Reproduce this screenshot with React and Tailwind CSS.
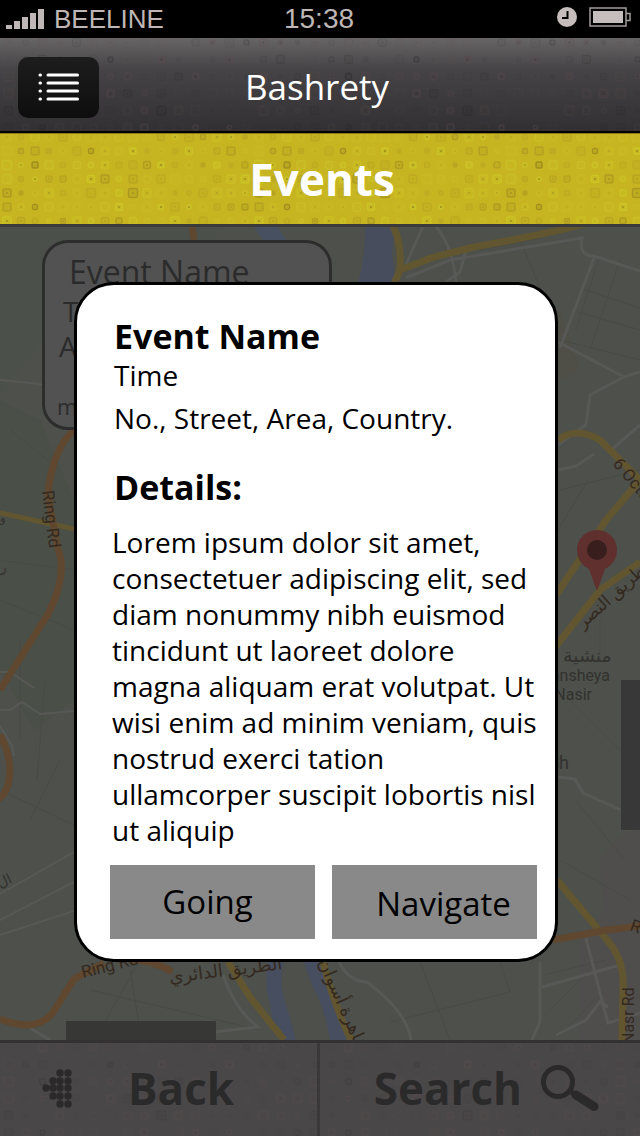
import React from "react";

function hash(n) {
  const v = Math.sin(n * 127.1 + 311.7) * 43758.5453;
  return v - Math.floor(v);
}

const MOSAIC_CELLS = Array.from({ length: 126 }, (_, i) => ({
  col: i % 18,
  row: Math.floor(i / 18),
  size: 4 + Math.round(hash(i) * 5),
  dark: hash(i + 500) > 0.55,
  tone: hash(i + 900) ** 2,
  dot: hash(i + 1300) > 0.4,
}));

function Mosaic({ id, cell, light, dark, strength }) {
  return (
    <svg className="absolute inset-0 h-full w-full" aria-hidden="true">
      <defs>
        <pattern id={id} y="-4" width={cell * 18} height={cell * 7} patternUnits="userSpaceOnUse">
          {MOSAIC_CELLS.map((c) => {
            const cx = c.col * cell + cell / 2;
            const cy = c.row * cell + cell / 2;
            const color = c.dark ? dark : light;
            const a = strength * (0.2 + c.tone * 0.8);
            return (
              <g key={c.row * 18 + c.col}>
                <rect x={cx - c.size / 2} y={cy - c.size / 2} width={c.size} height={c.size} rx="1.5" fill={color} fillOpacity={a * 0.35} stroke={color} strokeOpacity={a} strokeWidth="1.5" />
                {c.dot && <rect x={cx - 1} y={cy - 1} width="2" height="2" rx="0.5" fill={dark} fillOpacity={a} />}
              </g>
            );
          })}
        </pattern>
      </defs>
      <rect width="100%" height="100%" fill={`url(#${id})`} />
    </svg>
  );
}

function StatusBar() {
  return (
    <div className="grid h-[38px] grid-cols-[1fr_auto_1fr] items-center bg-black px-[8px] pl-[6px] font-['Liberation_Sans',sans-serif] text-[26px] leading-[36px] text-[#bfb7b5]">
      <div className="flex items-center gap-[10px]">
        <svg width="38" height="20" viewBox="0 0 38 20" fill="#bfb7b5" aria-label="Signal strength">
          <rect y="16" width="6" height="4" />
          <rect x="8" y="12" width="6" height="8" />
          <rect x="16" y="8" width="6" height="12" />
          <rect x="24" y="4" width="6" height="16" />
          <rect x="32" width="6" height="20" />
        </svg>
        <span>BEELINE</span>
      </div>
      <span className="text-center text-[28px]">15:38</span>
      <div className="flex items-center justify-end gap-[12px] pb-[4px]">
        <svg width="20" height="20" viewBox="0 0 20 20" aria-label="Alarm">
          <circle cx="10" cy="10" r="10" fill="#c6bebc" />
          <path d="M10.5 4v7H5" fill="none" stroke="#000" strokeWidth="2" />
        </svg>
        <svg width="43" height="20" viewBox="0 0 43 20" aria-label="Battery">
          <rect x="1" y="1" width="36" height="18" fill="none" stroke="#a39c9a" strokeWidth="1.5" />
          <rect x="4" y="4" width="30" height="12" fill="#c6bebc" />
          <path d="M37 6.500h4v7h-4" fill="none" stroke="#a39c9a" strokeWidth="1.5" />
        </svg>
      </div>
    </div>
  );
}

function CityMap() {
  return (
    <svg className="absolute inset-0 h-full w-full" viewBox="0 227 640 813" preserveAspectRatio="xMidYMid slice" fill="none" aria-label="Map">
      <rect y="224" width="640" height="816" fill="#4d504b" />
      <path d="M0 224h220l-30 60-120 20-70 90z" fill="#4c504a" />
      <path d="M0 400l40 20 34 80v200l-40 30-34-60z" fill="#4a4f47" />
      <path d="M580 940l60-70v170h-60z" fill="#504d4d" />
      <path d="M600 860q20-30 40-30v80l-35 10z" fill="#504e4d" />
      <path d="M500 300l60 10 20 60-40 20z" fill="#4f4f48" />

      <path d="M365 224h30l-3 30 4 30h-38q8-30 7-60z" fill="#474d5c" />
      <path d="M252 224h24l10 16 52 60h-34z" fill="#475061" />
      <path d="M268 960h16q-6 25 2 45 6 20 10 35h-18q-6-20-8-35-6-25-2-45z" fill="#474e5f" />
      <path d="M303 960h20l5 30 20 30 6 20h-24q-6-35-18-55z" fill="#474e5f" />

      <g stroke="#484b46" strokeWidth="1">
        <path d="M0 560l74 10M0 600l74 30M0 790l74 35M20 640v100M45 680l-8 100M10 430l50 40M60 760l-30 60" />
        <path d="M430 300l70 20M440 230l20 60M520 240l25 60M480 250l60-12M585 290l55 18M578 312l62 18M620 260l-30 90M600 255l-24 75M560 490l80-20M558 530l30-50" />
        <path d="M90 990l170 40M100 1030l40-70M130 970l10 60M420 962l30 78M500 962l10 30-120 30M550 1010l40-40M565 1030l40-40M545 975l60-15M560 860l70 40" />
        <path d="M560 340l80 20M600 620v40M570 700l60 60M575 800l50 60" />
      </g>

      <g stroke="#585957" strokeWidth="3">
        <path d="M424 224l-20 45M434 224q18 20 22 58M466 250l-6 22-14 10M406 278l44-18 132-22q-4 18 12 18l46 15M594 258l-34 90M558 342l66 35 16-5M624 377l-34 18-4 30-28 20M640 425l-30 26M558 470l18-4 18-12" />
        <path d="M0 380l40 4 34 10M0 672h10l12 8 12 8M0 710h10l12-8 18 12 34-3M0 726l12 20 2 10M0 894l74-42M0 920l74-38M0 935l74-24" strokeWidth="2" />
        <path d="M557 777l18 2 8 14 38 17M339 962q10 20 28 20 40 30 44 58M540 962v60l-8 18M586 938q14 55 22 85l32-10M542 987l78-22M556 1035l30-15 14-18 8 5M223 975q12 35 35 52l-44 5M30 1028l20 12" />
      </g>

      <g stroke="#625631" strokeWidth="7">
        <path d="M392 224q10 18 8 46M400 270l34-13 40-10q70-12 130-28M400 270l-6 14" />
        <path d="M558 440q18-14 42 0l40 40" />
        <path d="M640 480l-34 40-50 75M640 562l-40 28-44 56" />
        <path d="M0 513l74 16" strokeWidth="5" />
        <path d="M557 880l50 60q18 20 16 50l-1 50M228 962l22 35 34 43M323 962q10 40 28 78" />
      </g>
      <g stroke="#5f482f" strokeWidth="7">
        <path d="M192 224l2 16M74 430q-22 20-26 64 4 24 10 55 10 25-10 65L0 690M0 735q14 25 8 50-4 12-10 14" />
        <path d="M0 1019q35 14 52-5l22-35 30-16M130 960q24 0 42 12M553 940l54-10 33-4" />
      </g>

      <g stroke="none" fill="#34291f" className="font-['Roboto','DejaVu_Sans',sans-serif] text-[17px]">
        <text transform="translate(42 491) rotate(83)">Ring Rd</text>
        <text transform="translate(612 464) rotate(50)">6 October</text>
        <text transform="translate(583 629) rotate(-42)" className="text-[17px]" direction="rtl" textAnchor="end">طريق النصر</text>
        <text transform="translate(83 978) rotate(-14)">Ring Rd</text>
        <text transform="translate(170 983) rotate(-7)" className="text-[18px]" direction="rtl" textAnchor="end">الطريق الدائري</text>
        <text transform="translate(318 962) rotate(66)" className="text-[18px]" direction="rtl" textAnchor="end">القاهرة أسوان</text>
        <text transform="translate(629 930) rotate(20)">Rd</text>
        <text transform="translate(634 1044) rotate(-90)" className="text-[16px]">Nasr Rd</text>
      </g>
      <g fill="#33322f" className="font-['Roboto','DejaVu_Sans',sans-serif] text-[16px]">
        <text x="563" y="662" direction="rtl" textAnchor="end" className="text-[19px]">منشية</text>
        <text x="610" y="681" textAnchor="end">Mansheya</text>
        <text x="592" y="700" textAnchor="end">Nasir</text>
        <text x="569" y="769" textAnchor="end" className="text-[18px]">Sh</text>
        <text x="0" y="522" className="text-[12px]">و</text>
        <text x="0" y="572" className="text-[14px]">ر</text>
        <text transform="translate(0 888) rotate(-25)" className="text-[14px]">ال</text>
      </g>

      <path d="M597 591l-8-22q-12-6-12-19a20 20 0 0 1 40 0q0 13-12 19z" fill="#5f302d" />
      <circle cx="597" cy="550" r="10" fill="#381f1e" />
      <rect x="621" y="680" width="19" height="150" fill="#383838" />
      <rect x="66" y="1021" width="150" height="19" fill="#373835" />
    </svg>
  );
}

function BackIcon() {
  const dots = [[18, 4], [26, 4], [11, 12], [18, 12], [26, 12], [4, 19], [11, 19], [18, 19], [26, 19], [11, 27], [18, 27], [26, 27], [18, 35], [26, 35]];
  return (
    <svg width="30" height="39" viewBox="0 0 30 39" fill="#2b2a2b" aria-hidden="true">
      {dots.map(([x, y]) => <circle key={`${x}-${y}`} cx={x} cy={y} r="3.7" />)}
    </svg>
  );
}

export default function App() {
  return (
    <div className="flex min-h-screen flex-col bg-[#4d504b] font-['Open_Sans','Noto_Sans',sans-serif]">
      <StatusBar />
      <header className="relative grid h-[95px] grid-cols-[1fr_auto_1fr] items-center border-b-2 border-black bg-linear-to-b from-[#686566] via-[#454345] via-35% to-[#323032] px-[18px] pt-[5px]">
        <Mosaic id="header-mosaic" cell={17} light="#5d464c" dark="#232223" strength={0.35} />
        <button type="button" aria-label="Menu" className="relative flex h-[61px] w-[81px] items-center justify-center rounded-[10px] bg-linear-to-b from-[#1d1d1d] to-[#0e0e0e]">
          <svg width="42" height="28" viewBox="0 0 42 28" stroke="#fff" strokeWidth="3" strokeLinecap="round" aria-hidden="true">
            <path d="M2 2h.5M10 2h29.500M2 10h.5M10 10h29.500M2 18h.5M10 18h29.500M2 26h.5M10 26h29.500" />
          </svg>
        </button>
        <h1 className="relative pr-[6px] text-[35px] leading-[48px] text-white">Bashrety</h1>
      </header>
      <div className="relative flex h-[91px] items-center justify-center border-t border-[#8d7a1c] bg-[#c7b421] pl-[4px]">
        <Mosaic id="title-mosaic" cell={14} light="#cdce28" dark="#8a7a1a" strength={0.6} />
        <h2 className="relative text-[44px] leading-[60px] font-bold text-white">Events</h2>
      </div>

      <main className="relative flex-1 overflow-hidden border-t-3 border-[#3b3b3b] pt-[55px] pr-[82px] pb-[78px] pl-[74px]">
        <CityMap />
        <section className="absolute top-[13px] left-[42px] h-[190px] w-[290px] rounded-[26px] border-3 border-[#2d2d2d] bg-[#525252] text-[#2b2b2b]">
          <h3 className="pt-[7px] pl-[24px] text-[32px] leading-[44px]">Event Name</h3>
          <p className="pl-[18px] text-[28px] leading-[34px]">Time</p>
          <p className="pl-[14px] text-[28px] leading-[36px]">Area</p>
          <p className="pt-[24px] pl-[12px] text-[22px] leading-[36px]">more</p>
        </section>

        <div role="dialog" aria-labelledby="event-title" className="relative rounded-[40px] border-3 border-black bg-white pt-[30px] pr-[18px] pb-[20px] pl-[33px] text-black">
          <div className="pl-[4px]">
            <h3 id="event-title" className="text-[34px] leading-[42px] font-bold">Event Name</h3>
            <p className="text-[28px] leading-[36px]">Time</p>
            <p className="mt-[7px] text-[28px] leading-[36px]">No., Street, Area, Country.</p>
            <h4 className="mt-[30px] text-[34px] leading-[42px] font-bold">Details:</h4>
          </div>
          <p className="-mr-[12px] mt-[16px] pl-[2px] text-[28px] leading-[36px]">
            Lorem ipsum dolor sit amet,<br />
            consectetuer adipiscing elit, sed<br />
            diam nonummy nibh euismod<br />
            tincidunt ut laoreet dolore<br />
            magna aliquam erat volutpat. Ut<br />
            wisi enim ad minim veniam, quis<br />
            nostrud exerci tation<br />
            ullamcorper suscipit lobortis nisl<br />
            ut aliquip
          </p>
          <div className="mt-[17px] grid grid-cols-2 gap-[17px] text-[33px] leading-[44px]">
            <button type="button" className="h-[74px] bg-[#898989] pr-[10px]">Going</button>
            <button type="button" className="h-[74px] bg-[#898989] pt-[3px] pl-[18px]">Navigate</button>
          </div>
        </div>
      </main>

      <footer className="relative grid h-[96px] grid-cols-2 border-t-3 border-[#333132] bg-[#4a4748] text-[44px] leading-[60px] font-bold text-[#2b2a2b]">
        <Mosaic id="footer-mosaic" cell={17} light="#5a4a4d" dark="#363435" strength={0.35} />
        <button type="button" className="relative flex items-center gap-[56px] border-r-3 border-[#3a3839] pb-[3px] pl-[42px]">
          <BackIcon />
          <span>Back</span>
        </button>
        <button type="button" className="relative flex items-center justify-end gap-[18px] pr-[40px] pb-[3px]">
          <span>Search</span>
          <svg width="60" height="60" viewBox="0 0 60 60" fill="none" stroke="#2b2a2b" aria-hidden="true">
            <circle cx="18" cy="24" r="14.500" strokeWidth="5" />
            <path d="M30 33l7 5" strokeWidth="5" />
            <path d="M36 37l18 11.500" strokeWidth="9" strokeLinecap="round" />
          </svg>
        </button>
      </footer>
    </div>
  );
}
